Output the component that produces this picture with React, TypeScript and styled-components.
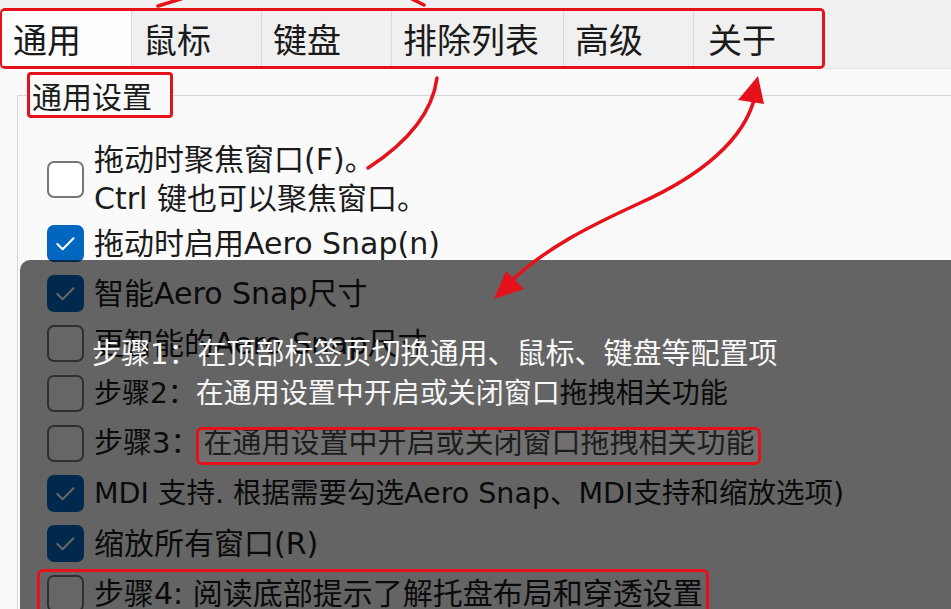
import styled, { createGlobalStyle, css } from 'styled-components';

const GlobalStyle = createGlobalStyle`
  html, body {
    margin: 0;
    padding: 0;
  }
  body {
    background: #fafafa;
    color: #1b1b1b;
    font-family: "Noto Sans CJK SC", "Noto Sans", sans-serif;
    overflow: hidden;
  }
`;

const RED = '#e5121b';

const Page = styled.div`
  position: relative;
  width: 951px;
  height: 609px;
  overflow: hidden;
  background: #fafafa;
`;

const TabStrip = styled.div`
  height: 69px;
  padding-top: 8px;
  box-sizing: border-box;
  background: #f0f0f0;
  border-bottom: 1px solid #e0e0e0;
`;

const TabList = styled.div`
  display: inline-flex;
  height: 61px;
  box-sizing: border-box;
  border: 3px solid ${RED};
  border-left-width: 2px;
  border-radius: 5px;
  overflow: hidden;
`;

const Tab = styled.div<{ $active?: boolean }>`
  display: flex;
  align-items: center;
  min-width: 130px;
  box-sizing: border-box;
  padding: 0 24px 0 11px;
  font-size: 34px;
  line-height: 1;
  color: #1a1a1a;
  border-right: 1px solid #dadada;
  background: ${(p) => (p.$active ? '#fdfdfd' : '#f0f0f0')};

  &:last-child {
    border-right: none;
    min-width: 128px;
    padding-left: 14px;
  }
`;

const Group = styled.fieldset`
  margin: 3px 0 0 17px;
  padding: 0;
  min-width: 0;
  height: 600px;
  border: none;
  border-top: 1px solid #d6d6d6;
  border-left: 1px solid #d6d6d6;
`;

const GroupTitle = styled.legend`
  margin-left: 9px;
  padding: 0 18px 0 2px;
  font-size: 30px;
  line-height: 40px;
  color: #1b1b1b;
  background: #fafafa;
  border: 3px solid ${RED};
  border-radius: 4px;
`;

const Body = styled.div`
  position: relative;
  padding: 22px 0 0 29px;
`;

const Dim = styled.div`
  position: absolute;
  left: 2px;
  right: 0;
  top: 142px;
  height: 400px;
  z-index: 2;
  background: rgba(0, 0, 0, 0.6);
  border-top-left-radius: 10px;
`;

const Row = styled.div<{ $size?: number }>`
  position: relative;
  display: flex;
  align-items: center;
  gap: 10px;
  min-height: 50px;
  font-family: "DejaVu Sans", "Noto Sans CJK SC", sans-serif;
  font-size: ${(p) => p.$size ?? 30}px;
  line-height: 39px;
  white-space: nowrap;
`;

const Box = styled.span<{ $checked?: boolean }>`
  flex: none;
  display: flex;
  align-items: center;
  justify-content: center;
  width: 37px;
  height: 37px;
  box-sizing: border-box;
  border-radius: 7px;
  border: 2px solid ${(p) => (p.$checked ? '#0067c0' : '#767676')};
  background: ${(p) => (p.$checked ? '#0067c0' : '#ffffff')};
`;

const Label = styled.span``;

const Lit = styled.span`
  position: relative;
  z-index: 3;
  color: #f6f6f6;
`;

const Caption = styled.span`
  position: absolute;
  left: 45px;
  top: 17px;
  z-index: 3;
  font-size: 29px;
  line-height: 39px;
  color: #f8f8f8;
`;

const Marked = styled.span`
  position: relative;
  padding: 0 4px;

  &::after {
    content: '';
    position: absolute;
    inset: 1px -3px -5px -3px;
    z-index: 3;
    border: 3px solid ${RED};
    border-radius: 6px;
    background: rgba(255, 255, 255, 0.08);
  }
`;

const Framed = styled.span`
  position: relative;
  display: inline-flex;
  align-items: center;
  gap: 10px;

  &::after {
    content: '';
    position: absolute;
    inset: -5px -6px -12px -10px;
    z-index: 3;
    border: 3px solid ${RED};
    border-radius: 6px;
  }
`;

const Ink = styled.svg`
  position: absolute;
  left: 0;
  top: 0;
  z-index: 10;
  pointer-events: none;
`;

const arrowStroke = css`
  fill: none;
  stroke: ${RED};
  stroke-width: 3.5;
  stroke-linecap: round;
`;

const Stroke = styled.path`
  ${arrowStroke}
`;

const Head = styled.polygon`
  fill: ${RED};
`;

function Check({ checked }: { checked?: boolean }) {
  return (
    <Box $checked={checked}>
      {checked && (
        <svg width="37" height="37" viewBox="0 0 37 37" style={{ marginLeft: -2 }}>
          <polyline
            points="11,19 16.5,24.5 28,13"
            fill="none"
            stroke="#ffffff"
            strokeWidth="2.2"
            strokeLinecap="round"
            strokeLinejoin="round"
          />
        </svg>
      )}
    </Box>
  );
}

const tabs = ['通用', '鼠标', '键盘', '排除列表', '高级', '关于'];

export default function App() {
  return (
    <>
      <GlobalStyle />
      <Page>
        <TabStrip>
          <TabList>
            {tabs.map((t, i) => (
              <Tab key={t} $active={i === 0}>
                {t}
              </Tab>
            ))}
          </TabList>
        </TabStrip>

        <Group>
          <GroupTitle>通用设置</GroupTitle>
          <Body>
            <Row>
              <Check />
              <Label>
                拖动时聚焦窗口(F)。
                <br />
                Ctrl 键也可以聚焦窗口。
              </Label>
            </Row>
            <Row>
              <Check checked />
              <Label>拖动时启用Aero Snap(n)</Label>
            </Row>
            <Row>
              <Check checked />
              <Label>智能Aero Snap尺寸</Label>
            </Row>
            <Row>
              <Check />
              <Label>更智能的Aero Snap尺寸</Label>
              <Caption>步骤1：在顶部标签页切换通用、鼠标、键盘等配置项</Caption>
            </Row>
            <Row $size={28}>
              <Check />
              <Label>
                步骤2：<Lit>在通用设置中开启或关闭窗口</Lit>拖拽相关功能
              </Label>
            </Row>
            <Row $size={29}>
              <Check />
              <Label>
                步骤3：<Marked>在通用设置中开启或关闭窗口拖拽相关功能</Marked>
              </Label>
            </Row>
            <Row $size={28.5}>
              <Check checked />
              <Label>MDI 支持. 根据需要勾选Aero Snap、MDI支持和缩放选项)</Label>
            </Row>
            <Row>
              <Check checked />
              <Label>缩放所有窗口(R)</Label>
            </Row>
            <Row>
              <Framed>
                <Check />
                <Label>步骤4: 阅读底部提示了解托盘布局和穿透设置</Label>
              </Framed>
            </Row>
            <Dim />
          </Body>
        </Group>

        <Ink width="951" height="609" viewBox="0 0 951 609">
          <Stroke d="M368,168 C402,146 432,116 437,78" />
          <Stroke d="M755,96 C745,140 700,176 640,203 C590,226 545,248 508,284" />
          <Head points="758,76 738,100 764,104" />
          <Head points="494,299 506,271 524,289" />
          <Stroke d="M158,6 L184,-2" />
          <Stroke d="M412,-1 L424,5" />
        </Ink>
      </Page>
    </>
  );
}
